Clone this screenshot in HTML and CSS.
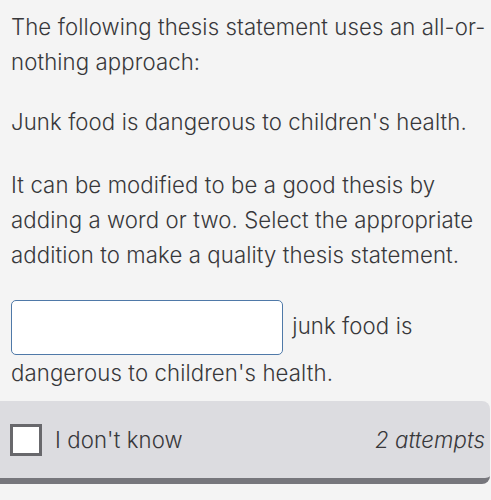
FILE: index.html
```html
<!DOCTYPE html>
<html>
<head>
<meta charset="utf-8">
<link rel="stylesheet" href="styles.css">
</head>
<body>
<div class="page">
  <div class="content">
    <p class="para p1">The following thesis statement uses an all-or-nothing approach:</p>
    <p class="para p2">Junk food is dangerous to children's health.</p>
    <p class="para p3">It can be modified to be a good thesis by adding a word or two. Select the appropriate addition to make a quality thesis statement.</p>
    <p class="para p4"><span class="blank"></span> junk food is dangerous to children's health.</p>
  </div>
  <div class="footer">
    <label class="idk"><span class="box"></span><span class="idk-text">I don't know</span></label>
    <span class="attempts">2 attempts</span>
  </div>
</div>
</body>
</html>
```
FILE: styles.css
```css
html, body {
  margin: 0;
  padding: 0;
  background: #f4f4f4;
}
body {
  font-family: Inter, "Noto Sans", sans-serif;
  font-size: 22.2px;
  font-weight: 350;
  letter-spacing: 0.1px;
  line-height: 35px;
  color: #38383b;
  width: 491px;
  height: 500px;
  overflow: hidden;
}
.content {
  padding: 9px 2px 0 11px;
}
.para {
  margin: 0;
}
.p2 {
  margin-top: 25px;
}
.p3 {
  margin-top: 28px;
}
.p4 {
  margin-top: 28px;
}
.blank {
  display: inline-block;
  vertical-align: middle;
  width: 270px;
  height: 53px;
  background: #ffffff;
  border: 1.5px solid #4f79a8;
  border-radius: 5px;
  margin-right: 3px;
}
.footer {
  margin-top: 11px;
  margin-left: -10px;
  margin-right: 1px;
  height: 77px;
  background: #dcdce0;
  border-bottom: 6px solid #76767c;
  border-radius: 0 8px 8px 8px;
  display: flex;
  align-items: center;
  justify-content: space-between;
  padding: 0 5px 0 20px;
}
.idk {
  display: flex;
  align-items: center;
}
.box {
  width: 26px;
  height: 26px;
  border: 3px solid #68686c;
  background: #ffffff;
  margin-right: 13px;
}
.attempts {
  font-style: italic;
}
```
